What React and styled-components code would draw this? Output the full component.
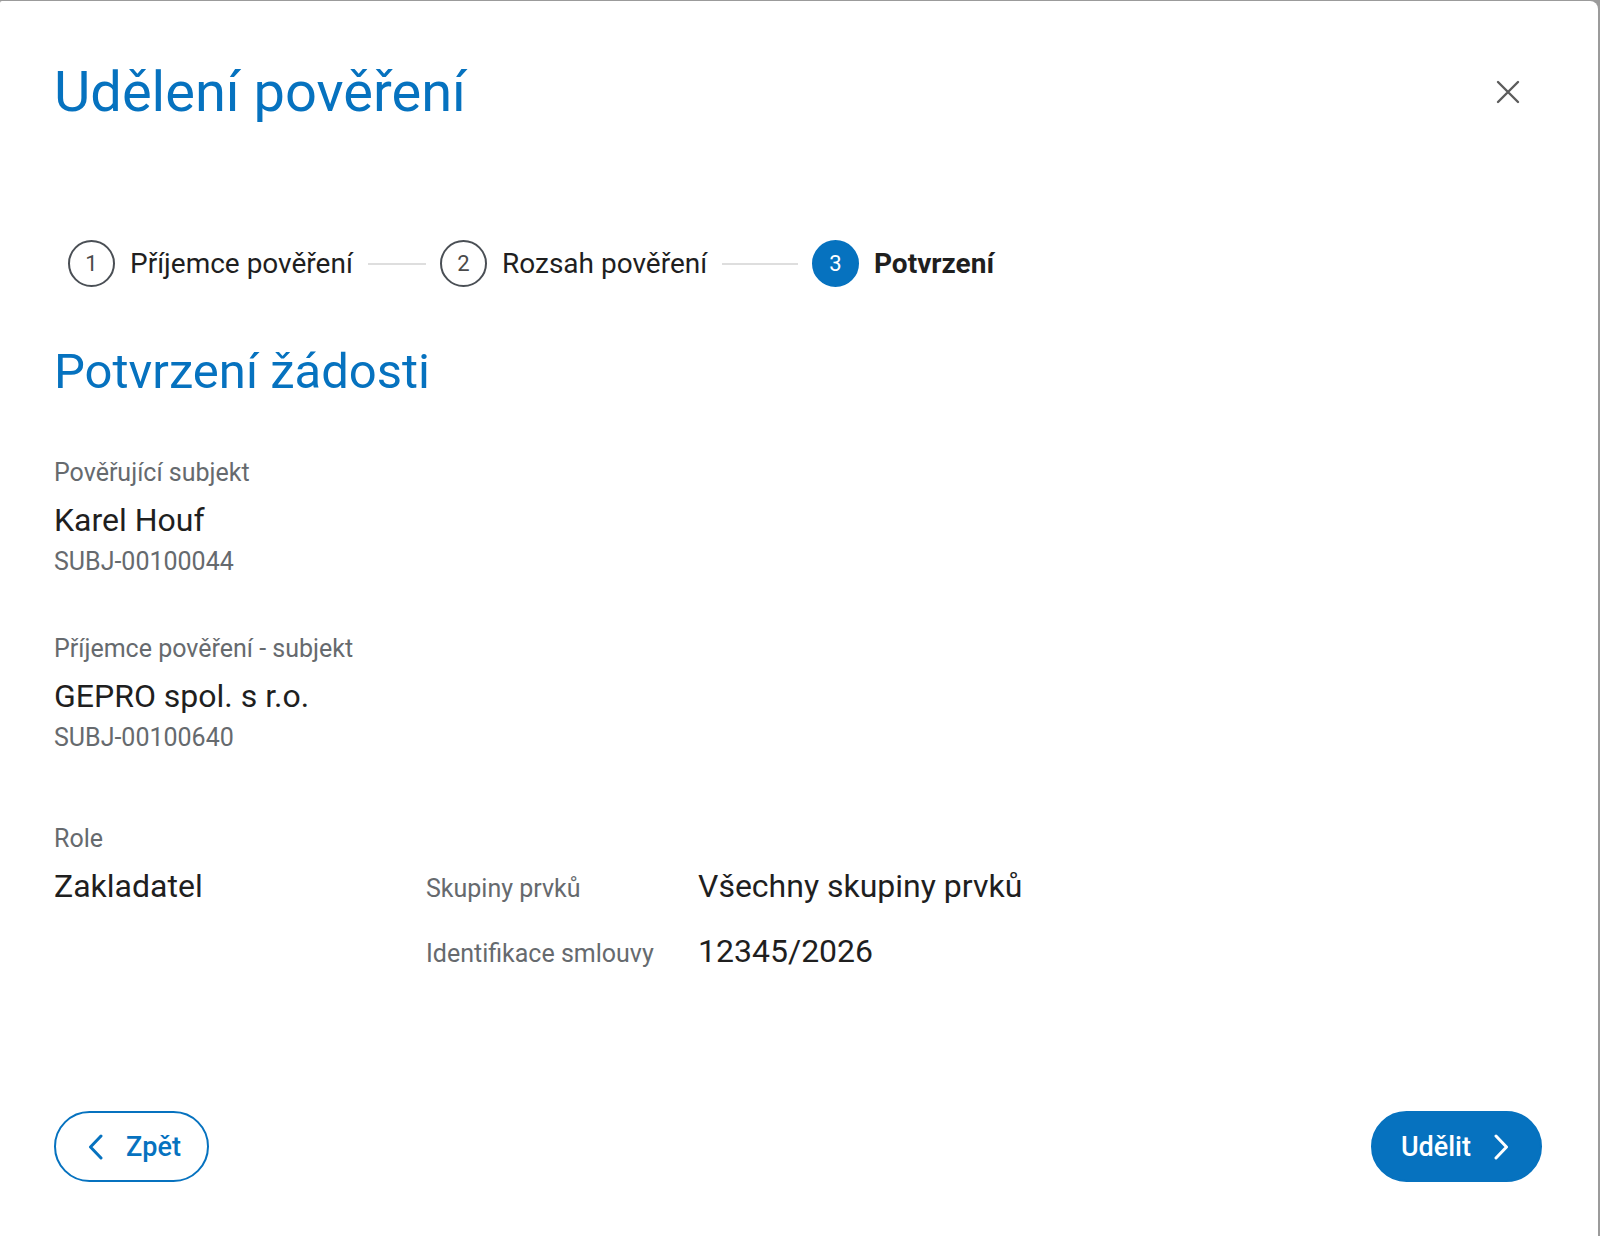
import React from 'react'
import styled, { createGlobalStyle } from 'styled-components'

const colors = {
  primary: '#0672bf',
  text: '#1f1f1f',
  muted: '#666a6e',
  stepBorder: '#4a4f55',
  line: '#dedede',
  overlay: '#9b9b9b',
}

const GlobalStyle = createGlobalStyle`
  html, body {
    margin: 0;
    padding: 0;
    background: ${colors.overlay};
    overflow: hidden;
  }
  * {
    box-sizing: border-box;
  }
`

const Dialog = styled.div`
  display: flex;
  flex-direction: column;
  margin-top: 1px;
  width: 1598px;
  height: 1235px;
  padding: 57px 56px 54px 54px;
  border-radius: 2px 8px 0 0;
  background: #fff;
  font-family: Roboto, 'Noto Sans', sans-serif;
  color: ${colors.text};
`

const Header = styled.div`
  display: flex;
  align-items: center;
  justify-content: space-between;
`

const Title = styled.h1`
  margin: 0;
  font-size: 56px;
  line-height: 68px;
  font-weight: 400;
  color: ${colors.primary};
`

const CloseButton = styled.button`
  display: flex;
  align-items: center;
  justify-content: center;
  width: 68px;
  height: 68px;
  padding: 0;
  border: none;
  background: none;
  cursor: pointer;
`

const Stepper = styled.ol`
  display: flex;
  align-items: center;
  margin: 114px 0 0;
  padding: 0 0 0 14px;
  list-style: none;
`

const Step = styled.li`
  display: flex;
  align-items: center;
  width: ${props => (props.$last ? 'auto' : '372px')};
`

const StepCircle = styled.span`
  display: flex;
  align-items: center;
  justify-content: center;
  flex: none;
  width: 47px;
  height: 47px;
  border-radius: 50%;
  border: 2px solid ${props => (props.$active ? colors.primary : colors.stepBorder)};
  background: ${props => (props.$active ? colors.primary : '#fff')};
  color: ${props => (props.$active ? '#fff' : '#4a4a4a')};
  font-size: 22px;
  line-height: 1;
`

const StepLabel = styled.span`
  margin-left: 15px;
  font-size: 28px;
  line-height: 34px;
  font-weight: ${props => (props.$active ? 700 : 400)};
  white-space: nowrap;
`

const Connector = styled.span`
  flex: 1;
  height: 2px;
  margin: 0 14px 0 15px;
  background: ${colors.line};
`

const Heading = styled.h2`
  margin: 55px 0 0;
  font-size: 49px;
  line-height: 60px;
  font-weight: 400;
  color: ${colors.primary};
`

const Field = styled.div`
  display: flex;
  flex-direction: column;
  margin-top: ${props => props.$gap || '56px'};
`

const Label = styled.span`
  font-size: 25px;
  line-height: 31px;
  color: ${colors.muted};
`

const Value = styled.span`
  margin-top: 13px;
  font-size: 32px;
  line-height: 38px;
`

const Code = styled.span`
  margin-top: 8px;
  font-size: 25px;
  line-height: 30px;
  color: ${colors.muted};
`

const RoleSection = styled.div`
  display: grid;
  grid-template-columns: 372px 1fr;
  margin-top: 70px;
`

const RoleColumn = styled.div`
  display: flex;
  flex-direction: column;
`

const Pairs = styled.dl`
  display: grid;
  grid-template-columns: 272px 1fr;
  align-items: baseline;
  row-gap: 27px;
  margin: 0;
  padding-top: 44px;
`

const PairLabel = styled.dt`
  font-size: 25px;
  line-height: 31px;
  color: ${colors.muted};
`

const PairValue = styled.dd`
  margin: 0;
  font-size: 32px;
  line-height: 38px;
`

const Footer = styled.div`
  display: flex;
  justify-content: space-between;
  margin-top: auto;
`

const Button = styled.button`
  display: flex;
  align-items: center;
  gap: 22px;
  height: 71px;
  padding: ${props => (props.$primary ? '0 31px 0 28px' : '0 26px 0 32px')};
  border: 2px solid ${colors.primary};
  border-radius: 36px;
  background: ${props => (props.$primary ? colors.primary : '#fff')};
  color: ${props => (props.$primary ? '#fff' : colors.primary)};
  font-family: inherit;
  font-size: 27px;
  font-weight: 500;
  cursor: pointer;
`

const Chevron = ({ dir = 'right' }) => (
  <svg width="16" height="26" viewBox="0 0 16 26" fill="none">
    <polyline
      points={dir === 'left' ? '13,2 2.5,13 13,24' : '3,2 13.5,13 3,24'}
      stroke="currentColor"
      strokeWidth="3"
      strokeLinecap="round"
      strokeLinejoin="round"
    />
  </svg>
)

const CloseIcon = () => (
  <svg width="24" height="24" viewBox="0 0 24 24" fill="none">
    <path
      d="M2 2 L22 22 M22 2 L2 22"
      stroke="#5c5c5c"
      strokeWidth="2.4"
      strokeLinecap="round"
    />
  </svg>
)

const steps = ['Příjemce pověření', 'Rozsah pověření', 'Potvrzení']
const activeStep = 2

const App = () => (
  <>
    <GlobalStyle />
    <Dialog role="dialog">
      <Header>
        <Title>Udělení pověření</Title>
        <CloseButton aria-label="Zavřít">
          <CloseIcon />
        </CloseButton>
      </Header>

      <Stepper>
        {steps.map((step, i) => {
          const last = i === steps.length - 1
          return (
            <Step key={step} $last={last}>
              <StepCircle $active={i === activeStep}>{i + 1}</StepCircle>
              <StepLabel $active={i === activeStep}>{step}</StepLabel>
              {!last && <Connector />}
            </Step>
          )
        })}
      </Stepper>

      <Heading>Potvrzení žádosti</Heading>

      <Field $gap="55px">
        <Label>Pověřující subjekt</Label>
        <Value>Karel Houf</Value>
        <Code>SUBJ-00100044</Code>
      </Field>

      <Field>
        <Label>Příjemce pověření - subjekt</Label>
        <Value>GEPRO spol. s r.o.</Value>
        <Code>SUBJ-00100640</Code>
      </Field>

      <RoleSection>
        <RoleColumn>
          <Label>Role</Label>
          <Value>Zakladatel</Value>
        </RoleColumn>
        <Pairs>
          <PairLabel>Skupiny prvků</PairLabel>
          <PairValue>Všechny skupiny prvků</PairValue>
          <PairLabel>Identifikace smlouvy</PairLabel>
          <PairValue>12345/2026</PairValue>
        </Pairs>
      </RoleSection>

      <Footer>
        <Button>
          <Chevron dir="left" />
          Zpět
        </Button>
        <Button $primary>
          Udělit
          <Chevron />
        </Button>
      </Footer>
    </Dialog>
  </>
)

export default App
